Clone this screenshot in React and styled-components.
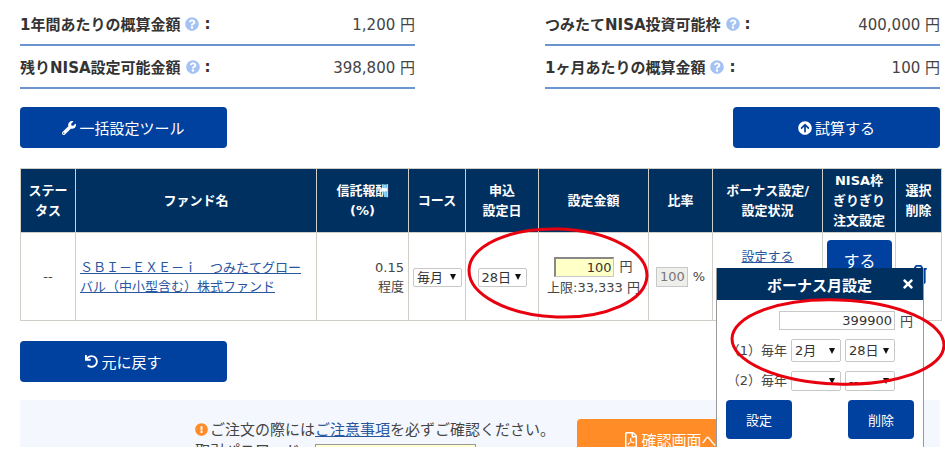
import styled, { createGlobalStyle } from 'styled-components'
import {
  FaQuestionCircle,
  FaWrench,
  FaArrowCircleUp,
  FaUndo,
  FaExclamationCircle,
  FaRegFilePdf,
  FaTimes,
  FaRegTrashAlt,
} from 'react-icons/fa'

const GlobalStyle = createGlobalStyle`
  html, body {
    margin: 0;
    padding: 0;
    background: #fff;
    overflow: hidden;
  }
  body {
    font-family: "DejaVu Sans", "Noto Sans CJK JP", sans-serif;
    color: #444;
  }
`

const Page = styled.div`
  position: relative;
  width: 945px;
  height: 453px;
  overflow: hidden;
  box-sizing: border-box;
  padding: 3px 5px 0 20px;
`

const Summary = styled.div`
  display: flex;
  justify-content: space-between;
`

const SummaryColumn = styled.div`
  width: 395px;
`

const SummaryRow = styled.div`
  display: flex;
  justify-content: space-between;
  align-items: center;
  height: 41px;
  border-bottom: 2px solid #6b95cf;
  font-size: 15px;
`

const SummaryLabel = styled.span`
  display: flex;
  align-items: center;
  gap: 5px;
  font-weight: 700;
  color: #333;
`

const HelpIcon = styled(FaQuestionCircle)`
  color: #a4c2f4;
  font-size: 14px;
`

const Toolbar = styled.div`
  display: flex;
  justify-content: space-between;
  margin-top: 18px;
`

const PrimaryButton = styled.button`
  display: flex;
  align-items: center;
  justify-content: center;
  gap: 3px;
  width: ${(p) => p.$width || 207}px;
  height: ${(p) => p.$height || 41}px;
  padding: 0;
  border: none;
  border-radius: 4px;
  background: #00409e;
  color: #fff;
  font-family: inherit;
  font-size: ${(p) => p.$size || 15}px;
`

const FundTable = styled.table`
  width: 921px;
  margin-top: 20px;
  border-collapse: collapse;
  table-layout: fixed;
  font-size: 13px;

  th, td {
    border: 1px solid #cfcfc8;
    padding: 0 4px;
  }
`

const HeadCell = styled.th`
  height: 64px;
  background: #003060;
  color: #fff;
  font-size: 13px;
  line-height: 20px;
  font-weight: 700;
  text-align: center;
  box-sizing: border-box;
`

const BodyCell = styled.td`
  height: 88px;
  box-sizing: border-box;
  text-align: ${(p) => p.$align || 'center'};
  vertical-align: ${(p) => (p.$top !== undefined ? 'top' : 'middle')};
  line-height: 19px;
  color: #444;

  && {
    padding-top: ${(p) => p.$top || 0}px;
  }
`

const BlueLink = styled.a`
  color: #28569f;
  text-decoration: underline;
`

const SelectBox = styled.span`
  position: relative;
  display: inline-block;
  vertical-align: middle;
  width: ${(p) => p.$width || 49}px;
  height: ${(p) => p.$height || 19}px;

  &::after {
    content: '';
    position: absolute;
    right: 6px;
    top: 50%;
    transform: translateY(-50%);
    border-left: 3.5px solid transparent;
    border-right: 3.5px solid transparent;
    border-top: 6px solid #111;
    pointer-events: none;
  }
`

const Select = styled.select`
  appearance: none;
  width: 100%;
  height: 100%;
  box-sizing: border-box;
  margin: 0;
  padding: 0 0 0 3px;
  border: 1px solid #c8c8c8;
  border-radius: 2px;
  background: #fff;
  color: #333;
  font-family: inherit;
  font-size: 13px;
`

const AmountLine = styled.div`
  display: flex;
  align-items: center;
  justify-content: center;
  gap: 5px;
`

const NumberInput = styled.input`
  box-sizing: border-box;
  width: ${(p) => p.$width}px;
  height: ${(p) => p.$height || 20}px;
  margin: 0;
  padding: 0 2px;
  text-align: right;
  font-family: inherit;
  font-size: 13px;
  color: ${(p) => (p.disabled ? '#777' : '#333')};
  background: ${(p) => p.$bg || '#fff'};
  border: 1px solid #c8c8c8;
  ${(p) => p.$inset && 'border-top: 2px solid #888; border-left: 2px solid #888;'}
`

const Limit = styled.div`
  margin-top: 1px;
  white-space: nowrap;
`

const TrashIcon = styled(FaRegTrashAlt)`
  color: #00409e;
  font-size: 19px;
`

const BackRow = styled.div`
  margin-top: 20px;
`

const Notice = styled.div`
  display: flex;
  height: 47px;
  width: 920px;
  margin-top: 18px;
  overflow: hidden;
  background: #f4f8fe;
  padding: 19px 0 0 175px;
  box-sizing: border-box;
`

const NoticeText = styled.div`
  width: 382px;
  font-size: 15px;
  line-height: 22px;
  white-space: nowrap;
  flex-shrink: 0;
`

const WarnIcon = styled(FaExclamationCircle)`
  color: #ff8c26;
  font-size: 13px;
  margin-right: 2px;
  vertical-align: -1px;
`

const PasswordRow = styled.div`
  display: flex;
  gap: 15px;
  margin-top: 3px;
  font-size: 15px;
  line-height: 15px;
`

const PasswordInput = styled.input`
  box-sizing: border-box;
  width: 161px;
  height: 24px;
  border: 1px solid #999;
  background: #ffffd0;
`

const OrangeButton = styled.button`
  display: flex;
  align-items: center;
  justify-content: center;
  gap: 2px;
  flex-shrink: 0;
  width: 186px;
  height: 41px;
  padding: 0;
  border: none;
  border-radius: 4px;
  background: #ff8c26;
  color: #fff;
  font-family: inherit;
  font-size: 15px;
`

const Popup = styled.div`
  position: absolute;
  left: 716px;
  top: 268px;
  width: 208px;
  height: 179px;
  box-sizing: border-box;
  background: #fff;
  border-left: 1px solid #999;
  border-right: 1px solid #999;
  font-size: 13px;
  color: #444;
`

const PopupHead = styled.div`
  display: flex;
  align-items: center;
  justify-content: space-between;
  height: 32px;
  padding: 0 8px 0 50px;
  background: #003060;
  color: #fff;
  font-size: 15px;
  font-weight: 700;
`

const PopupBody = styled.div`
  display: flex;
  flex-direction: column;
  padding: 11px 9px 0 9px;
`

const PopupAmount = styled.div`
  display: flex;
  justify-content: flex-end;
  align-items: center;
  gap: 5px;
  padding-right: 1px;
`

const MonthRow = styled.div`
  display: flex;
  align-items: center;
  justify-content: flex-end;
  gap: 4px;
  height: ${(p) => p.$height}px;
  margin-top: ${(p) => p.$top}px;
  padding-right: 19px;
  white-space: nowrap;
`

const MonthLabel = styled.span`
  margin-bottom: 3px;
`

const PopupActions = styled.div`
  display: flex;
  justify-content: space-between;
  margin-top: 9px;
`

const Annotation = styled.svg`
  position: absolute;
  left: 0;
  top: 0;
  pointer-events: none;
`

const heads = [
  { w: 55, label: <>ステー<br />タス</> },
  { w: 241, label: 'ファンド名' },
  { w: 92, label: <>信託報酬<br />(%)</> },
  { w: 57, label: 'コース' },
  { w: 73, label: <>申込<br />設定日</> },
  { w: 110, label: '設定金額' },
  { w: 64, label: '比率' },
  { w: 110, label: <>ボーナス設定/<br />設定状況</> },
  { w: 73, label: <>NISA枠<br />ぎりぎり<br />注文設定</> },
  { w: 46, label: <>選択<br />削除</> },
]

function Option({ value, width, height }) {
  return (
    <SelectBox $width={width} $height={height}>
      <Select defaultValue={value}>
        <option>{value}</option>
      </Select>
    </SelectBox>
  )
}

function App() {
  return (
    <Page>
      <GlobalStyle />
      <Summary>
        <SummaryColumn>
          <SummaryRow>
            <SummaryLabel>1年間あたりの概算金額 <HelpIcon /> :</SummaryLabel>
            <span>1,200 円</span>
          </SummaryRow>
          <SummaryRow>
            <SummaryLabel>残りNISA設定可能金額 <HelpIcon /> :</SummaryLabel>
            <span>398,800 円</span>
          </SummaryRow>
        </SummaryColumn>
        <SummaryColumn>
          <SummaryRow>
            <SummaryLabel>つみたてNISA投資可能枠 <HelpIcon /> :</SummaryLabel>
            <span>400,000 円</span>
          </SummaryRow>
          <SummaryRow>
            <SummaryLabel>1ヶ月あたりの概算金額 <HelpIcon /> :</SummaryLabel>
            <span>100 円</span>
          </SummaryRow>
        </SummaryColumn>
      </Summary>

      <Toolbar>
        <PrimaryButton><FaWrench size={14} /> 一括設定ツール</PrimaryButton>
        <PrimaryButton><FaArrowCircleUp size={14} /> 試算する</PrimaryButton>
      </Toolbar>

      <FundTable>
        <colgroup>
          {heads.map((h, i) => <col key={i} width={h.w} />)}
        </colgroup>
        <thead>
          <tr>
            {heads.map((h, i) => <HeadCell key={i}>{h.label}</HeadCell>)}
          </tr>
        </thead>
        <tbody>
          <tr>
            <BodyCell>--</BodyCell>
            <BodyCell $align="left">
              <BlueLink href="#">ＳＢＩ－ＥＸＥ－ｉ　つみたてグローバル（中小型含む）株式ファンド</BlueLink>
            </BodyCell>
            <BodyCell $align="right">0.15<br />程度</BodyCell>
            <BodyCell><Option value="毎月" /></BodyCell>
            <BodyCell><Option value="28日" /></BodyCell>
            <BodyCell>
              <AmountLine>
                <NumberInput $width={60} $bg="#ffffc8" $inset defaultValue="100" />円
              </AmountLine>
              <Limit>上限:33,333 円</Limit>
            </BodyCell>
            <BodyCell>
              <AmountLine>
                <NumberInput $width={32} $bg="#eeeeea" disabled defaultValue="100" />%
              </AmountLine>
            </BodyCell>
            <BodyCell $top={14}><BlueLink href="#">設定する</BlueLink></BodyCell>
            <BodyCell $top={7}>
              <PrimaryButton $width={65} $height={40} $size={16}>する</PrimaryButton>
            </BodyCell>
            <BodyCell><TrashIcon /></BodyCell>
          </tr>
        </tbody>
      </FundTable>

      <BackRow>
        <PrimaryButton><FaUndo size={13} /> 元に戻す</PrimaryButton>
      </BackRow>

      <Notice>
        <NoticeText>
          <WarnIcon />ご注文の際には<BlueLink href="#">ご注意事項</BlueLink>を必ずご確認ください。
          <PasswordRow>
            取引パスワード
            <PasswordInput />
          </PasswordRow>
        </NoticeText>
        <OrangeButton><FaRegFilePdf size={16} /> 確認画面へ</OrangeButton>
      </Notice>

      <Popup>
        <PopupHead>
          ボーナス月設定
          <FaTimes size={14} />
        </PopupHead>
        <PopupBody>
          <PopupAmount>
            <NumberInput $width={116} $height={19} defaultValue="399900" />円
          </PopupAmount>
          <MonthRow $height={23} $top={9}>
            <MonthLabel>（1）毎年</MonthLabel>
            <Option value="2月" width={50} height={23} />
            <Option value="28日" width={50} height={23} />
          </MonthRow>
          <MonthRow $height={20} $top={9}>
            <MonthLabel>（2）毎年</MonthLabel>
            <Option value="" width={50} height={20} />
            <Option value="--" width={50} height={20} />
          </MonthRow>
          <PopupActions>
            <PrimaryButton $width={66} $height={39} $size={13}>設定</PrimaryButton>
            <PrimaryButton $width={66} $height={39} $size={13}>削除</PrimaryButton>
          </PopupActions>
        </PopupBody>
      </Popup>

      <Annotation width="945" height="453" viewBox="0 0 945 453">
        <ellipse cx="558" cy="273" rx="89" ry="44" transform="rotate(2 558 273)" fill="none" stroke="#e8000f" strokeWidth="3" />
        <ellipse cx="838" cy="342" rx="106" ry="42" transform="rotate(2 838 342)" fill="none" stroke="#e8000f" strokeWidth="3" />
      </Annotation>
    </Page>
  )
}

export default App
